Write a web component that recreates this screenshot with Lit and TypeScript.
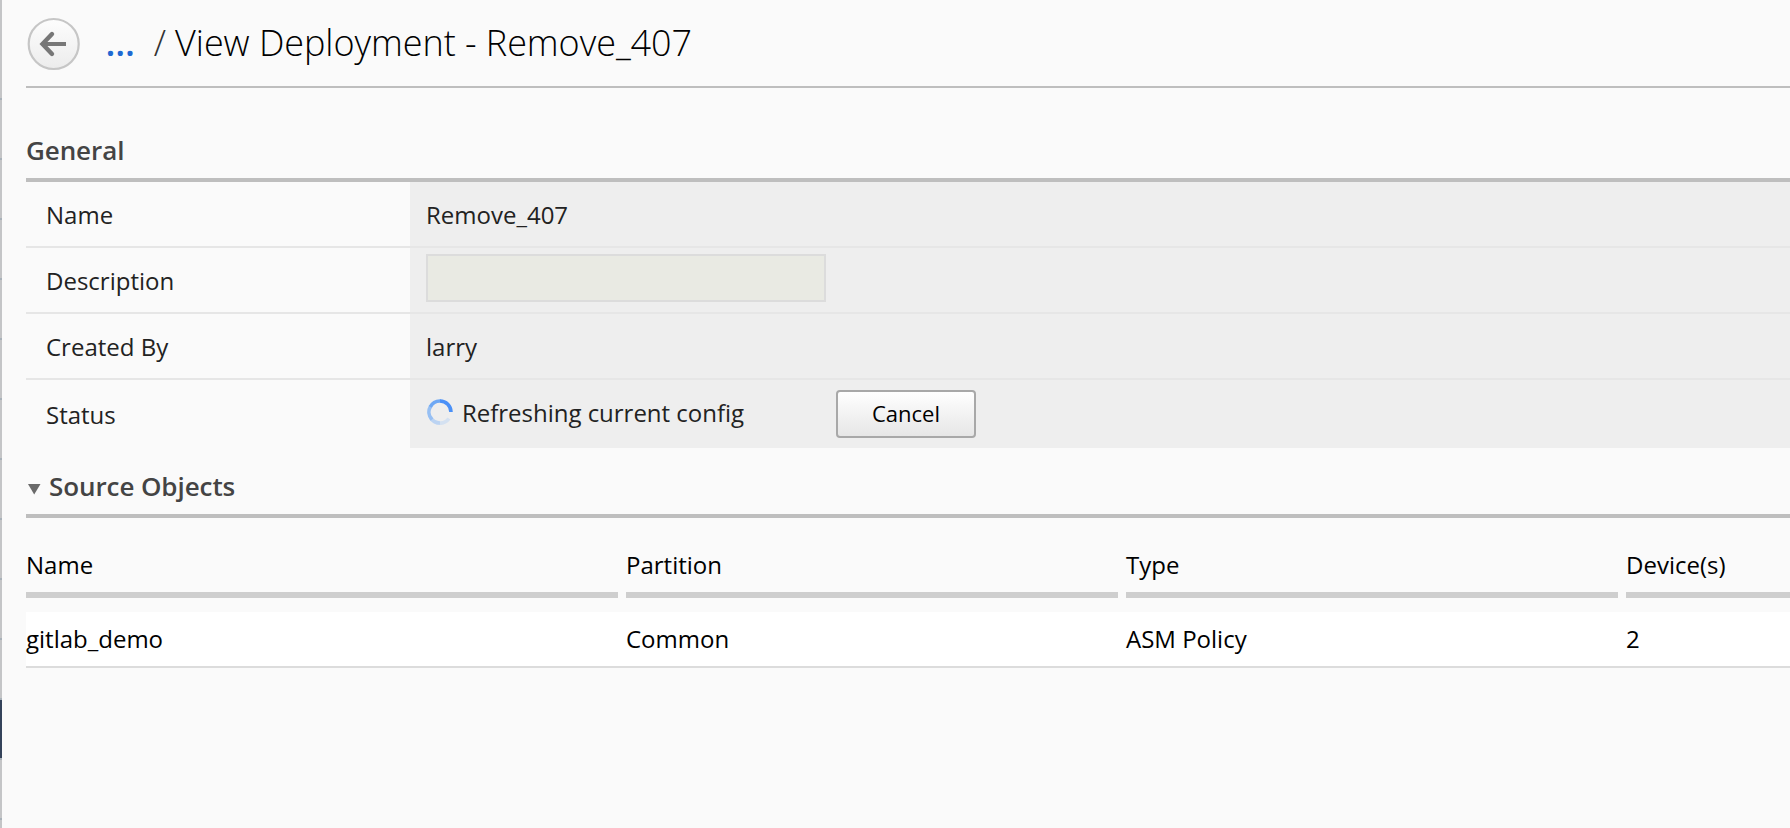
import { LitElement, html, css } from "lit";
import { customElement } from "lit/decorators.js";

const COLUMNS = ["Name", "Partition", "Type", "Device(s)"];
const ROWS = [["gitlab_demo", "Common", "ASM Policy", "2"]];

@customElement("app-root")
export class AppRoot extends LitElement {
  static styles = css`
    :host {
      display: flex;
      height: 828px;
      overflow: hidden;
      background: #fafafa;
      color: #222;
      font-family: "Open Sans", "Noto Sans", sans-serif;
      font-size: 24px;
      line-height: 32px;
    }
    * { box-sizing: border-box; }
    .rail { flex: 0 0 2px; display: flex; flex-direction: column; background: #c4c5c7; overflow: hidden; padding-top: 40px; }
    .seg { flex: 0 0 60px; border-bottom: 2px solid #a9b1b9; }
    .seg.active { background: #34435a; }
    .main { flex: 1; min-width: 0; padding-left: 24px; }
    header { height: 88px; display: flex; align-items: center; border-bottom: 2px solid #bebebe; white-space: nowrap; }
    .back { width: 54px; height: 54px; margin: 2px 0 0 1px; flex: none; }
    .crumb { font-size: 36px; line-height: 48px; color: #1f69d2; margin: 0 0 1px 24.5px; font-weight: 600; letter-spacing: -0.1px; }
    .sep { font-size: 36px; font-weight: 300; color: #333; margin-left: 19px; }
    h1 { font-size: 36px; line-height: 48px; font-weight: 300; color: #000; margin: 0 0 0 9px; letter-spacing: -0.05px; }
    h2 { margin: 0; font-size: 26px; line-height: 36px; font-weight: 600; letter-spacing: -0.08px; color: #444; border-bottom: 4px solid #bebebe; display: flex; align-items: flex-end; }
    .general { height: 94px; padding-bottom: 10px; }
    .source { height: 70px; padding-bottom: 10px; }
    .tri { width: 14px; height: 12px; margin: 0 8px 9px 1px; }
    .row { display: grid; grid-template-columns: 384px 1fr; height: 66px; border-bottom: 2px solid #e6e6e6; background: linear-gradient(90deg, #fafafa 384px, #eee 384px); }
    .row.last { height: 68px; border-bottom: 0; }
    .label { padding: 17px 0 0 20px; }
    .last .label { padding-top: 19px; }
    .value { padding: 17px 0 0 16px; }
    .value.field { padding-top: 6px; }
    .value.status { display: flex; padding-top: 10px; }
    .input { display: block; width: 400px; height: 48px; border: 2px solid #dcdcdc; background: #e9eae3; border-radius: 0; padding: 0; }
    .spin { width: 26px; height: 26px; margin: 9px 9px 0 1px; }
    .text { width: 374px; padding-top: 7px; letter-spacing: -0.02px; }
    button { width: 140px; height: 48px; border: 2px solid #a8a8a8; border-radius: 4px; background: linear-gradient(#fff, #e6e6e6); font: 22px "Open Sans", sans-serif; color: #000; padding: 0 0 2px; }
    .grid { display: grid; grid-template-columns: 592px 492px 492px 492px; column-gap: 8px; color: #000; }
    .th { height: 80px; padding-top: 31px; border-bottom: 6px solid #cecece; }
    .tr { margin-top: 14px; height: 56px; padding-top: 11px; background: #fff; border-bottom: 2px solid #dcdcdc; }
  `;

  render() {
    return html`
      <div class="rail">
        ${Array.from({ length: 11 }, () => html`<div class="seg"></div>`)}
        <div class="seg active"></div>
        <div class="seg"></div>
      </div>
      <div class="main">
        <header>
          <svg class="back" viewBox="0 0 54 54">
            <defs><linearGradient id="g" x2="0" y2="1"><stop stop-color="#fdfdfd" /><stop offset="1" stop-color="#ececec" /></linearGradient></defs>
            <circle cx="26.700" cy="27" r="25" fill="url(#g)" stroke="#c6c6c6" stroke-width="2.200" />
            <path d="M39 27H16" fill="none" stroke="#777" stroke-width="4" />
            <path d="M25 17L15.500 27L25 37" fill="none" stroke="#777" stroke-width="4.400" stroke-linecap="round" />
          </svg>
          <span class="crumb">...</span><span class="sep">/</span>
          <h1>View Deployment - Remove_407</h1>
        </header>
        <h2 class="general">General</h2>
        <div class="row"><div class="label">Name</div><div class="value">Remove_407</div></div>
        <div class="row"><div class="label">Description</div><div class="value field"><input class="input" disabled /></div></div>
        <div class="row"><div class="label">Created By</div><div class="value">larry</div></div>
        <div class="row last">
          <div class="label">Status</div>
          <div class="value status">
            <svg class="spin" viewBox="0 0 26 26" fill="none" stroke-width="3.600">
              <path d="M4.900 20.600A11 11 0 0 0 22 19.500" stroke="#d4e1f1" />
              <path d="M3.500 18.500A11 11 0 0 0 13 24" stroke="#bbd3f2" />
              <path d="M3.500 7.500A11 11 0 0 0 4.900 20.600" stroke="#96bff3" />
              <path d="M13.500 2A11 11 0 0 0 3.300 7.900" stroke="#6ea8f4" />
              <path d="M24 13A11 11 0 0 0 13 2" stroke="#4a90f7" />
            </svg>
            <span class="text">Refreshing current config</span>
            <button>Cancel</button>
          </div>
        </div>
        <h2 class="source">
          <svg class="tri" viewBox="0 0 14 12"><path d="M1 1H13.500L7.200 11.500Z" fill="#6a6a6a" /></svg>Source Objects
        </h2>
        <div class="grid">${COLUMNS.map((c) => html`<div class="th">${c}</div>`)}</div>
        ${ROWS.map((r) => html`<div class="grid tr">${r.map((c) => html`<div>${c}</div>`)}</div>`)}
      </div>
    `;
  }
}
